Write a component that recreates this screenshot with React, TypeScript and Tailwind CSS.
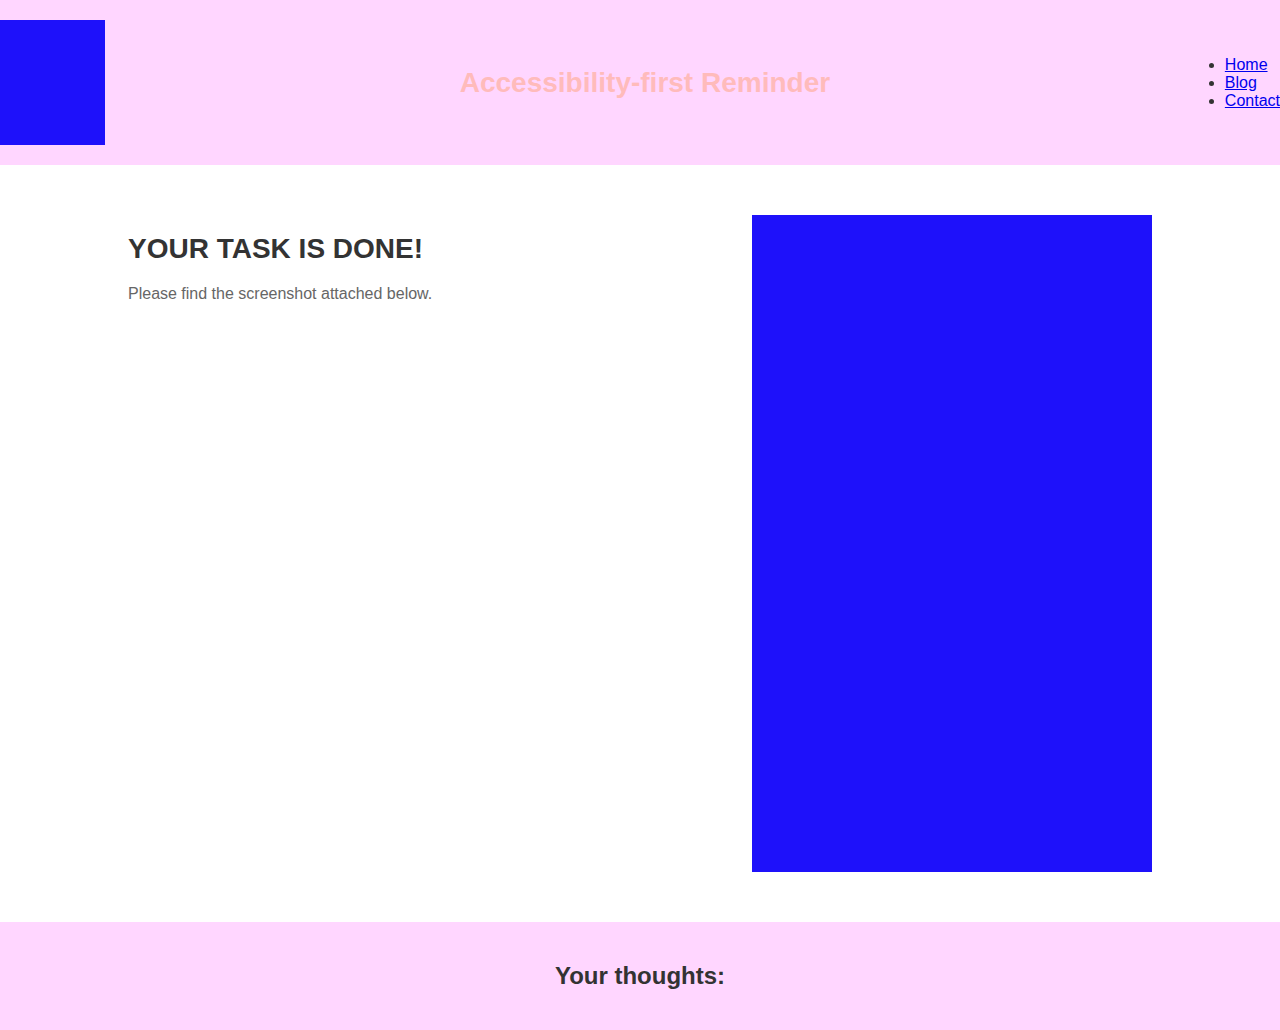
export default function App() {
  return (
    <div className="font-['Liberation_Sans',Arial,sans-serif] text-[#333] bg-white">
      <header className="bg-[#ffd6ff] flex justify-between items-center py-[20px]">
        <div className="w-[105px] h-[125px] bg-[#1e11fa]" />
        <h1 className="text-[28px] font-bold text-[#ffbbbb] leading-[32px]">Accessibility-first Reminder</h1>
        <nav>
          <ul className="list-disc pl-[40px] text-[16px] leading-[18px]">
            <li><a href="#" className="text-[#0000ee] underline">Home</a></li>
            <li><a href="#" className="text-[#0000ee] underline">Blog</a></li>
            <li><a href="#" className="text-[#0000ee] underline">Contact</a></li>
          </ul>
        </nav>
      </header>
      <main className="py-[50px]">
        <div className="max-w-[1024px] mx-auto flex justify-between items-start">
          <div className="pt-[18px]">
            <h2 className="text-[28px] font-bold leading-[32px] text-[#333]">YOUR TASK IS DONE!</h2>
            <p className="mt-[18px] text-[16px] leading-[22px] text-[#666]">Please find the screenshot attached below.</p>
          </div>
          <div className="w-[400px] h-[657px] bg-[#1e11fa]" />
        </div>
      </main>
      <footer className="bg-[#ffd6ff] py-[40px] text-center">
        <h2 className="text-[24px] font-bold leading-[28px] text-[#333]">Your thoughts:</h2>
      </footer>
    </div>
  );
}
